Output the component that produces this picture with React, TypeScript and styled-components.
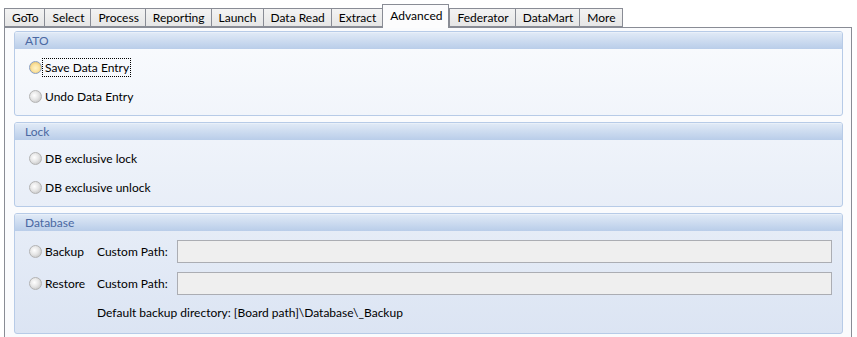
import React from 'react';
import styled, { createGlobalStyle } from 'styled-components';

const GlobalStyle = createGlobalStyle`
  body {
    margin: 0;
    background: #ffffff;
    font-family: Lato, 'Noto Sans', sans-serif;
    font-size: 12px;
    color: #000;
  }
`;

const tabs = ['GoTo', 'Select', 'Process', 'Reporting', 'Launch', 'Data Read', 'Extract', 'Advanced', 'Federator', 'DataMart', 'More'];

function App(): JSX.Element {
    return (
        <Window>
            <GlobalStyle />
            <TabStrip>
                {tabs.map((t) => (
                    <Tab key={t} $active={t === 'Advanced'}>{t}</Tab>
                ))}
            </TabStrip>

            <Pane>
                <Group>
                    <GroupHeader>ATO</GroupHeader>
                    <GroupBody>
                        <RadioRow>
                            <Radio $focused />
                            <FocusLabel>Save Data Entry</FocusLabel>
                        </RadioRow>
                        <RadioRow>
                            <Radio />
                            <span>Undo Data Entry</span>
                        </RadioRow>
                    </GroupBody>
                </Group>

                <Group>
                    <GroupHeader>Lock</GroupHeader>
                    <GroupBody>
                        <RadioRow>
                            <Radio />
                            <span>DB exclusive lock</span>
                        </RadioRow>
                        <RadioRow>
                            <Radio />
                            <span>DB exclusive unlock</span>
                        </RadioRow>
                    </GroupBody>
                </Group>

                <Group>
                    <GroupHeader>Database</GroupHeader>
                    <DbGrid>
                        <RadioRow>
                            <Radio />
                            <span>Backup</span>
                        </RadioRow>
                        <span>Custom Path:</span>
                        <PathBox />

                        <RadioRow>
                            <Radio />
                            <span>Restore</span>
                        </RadioRow>
                        <span>Custom Path:</span>
                        <PathBox />

                        <Hint>Default backup directory: [Board path]\Database\_Backup</Hint>
                    </DbGrid>
                </Group>
            </Pane>
        </Window>
    );
}

const Window = styled.div`
  width: 857px;
  height: 337px;
  overflow: hidden;
  padding-top: 4px;
  box-sizing: border-box;
`;

const TabStrip = styled.div`
  display: flex;
  align-items: flex-end;
  padding-left: 4px;
  height: 23px;
  position: relative;
  z-index: 1;
`;

const Tab = styled.div<{ $active?: boolean }>`
  height: ${(p) => (p.$active ? '24px' : '19px')};
  line-height: ${(p) => (p.$active ? '22px' : '18px')};
  padding: 0 6px 0 7px;
  margin-bottom: ${(p) => (p.$active ? '-1px' : '0')};
  border: 1px solid #898c95;
  border-bottom: ${(p) => (p.$active ? 'none' : '1px solid #898c95')};
  border-right: ${(p) => (p.$active ? '1px solid #898c95' : 'none')};
  background: ${(p) => (p.$active ? '#fcfcfd' : 'linear-gradient(#f3f3f3, #e6e6e6)')};
  box-sizing: border-box;
  white-space: nowrap;

  &:last-child {
    border-right: 1px solid #898c95;
  }
`;

const Pane = styled.div`
  margin: 0 5px 0 4px;
  height: 320px;
  border: 1px solid #898c95;
  border-bottom: none;
  background: #fafbfd;
  padding: 3px 8px 0 9px;
  box-sizing: border-box;
  display: flex;
  flex-direction: column;
  gap: 6px;
`;

const Group = styled.div`
  border: 1px solid #b7cbe7;
  border-radius: 3px;
  overflow: hidden;
  background: linear-gradient(#fdfeff, #dbe4f3) fixed;
`;

const GroupHeader = styled.div`
  height: 16px;
  line-height: 15px;
  padding-left: 10px;
  color: #4a68a2;
  background: linear-gradient(#dfe9f6, #b9cde9);
  border-top: 1px solid #e9f0f9;
`;

const GroupBody = styled.div`
  display: flex;
  flex-direction: column;
  gap: 5px;
  padding: 6px 0 7px 14px;
`;

const RadioRow = styled.div`
  display: flex;
  align-items: center;
  gap: 3px;
  height: 24px;
`;

const Radio = styled.span<{ $focused?: boolean }>`
  width: 13px;
  height: 13px;
  border-radius: 50%;
  box-sizing: border-box;
  border: 1px solid ${(p) => (p.$focused ? '#8a9fc0' : '#b3b3b3')};
  background: ${(p) =>
    p.$focused
      ? 'radial-gradient(circle at 50% 55%, #fff3c8 0, #fbe3a0 45%, #f0cf80 70%, #f6f0e0 100%)'
      : 'radial-gradient(circle at 40% 40%, #ffffff 0, #e6e6e6 45%, #c9c9c9 80%, #e8e8e8 100%)'};
  flex-shrink: 0;
`;

const FocusLabel = styled.span`
  outline: 1px dotted #000;
  outline-offset: 1px;
  margin-left: -1px;
  padding-left: 1px;
`;

const DbGrid = styled.div`
  display: grid;
  grid-template-columns: 68px 80px 1fr;
  align-items: center;
  row-gap: 8px;
  padding: 8px 10px 8px 14px;
`;

const PathBox = styled.div`
  height: 23px;
  background: #efefef;
  border: 1px solid #abadb3;
  box-sizing: border-box;
`;

const Hint = styled.span`
  grid-column: 2 / 4;
  height: 24px;
  line-height: 24px;
  margin-top: -2px;
`;

export default App;
